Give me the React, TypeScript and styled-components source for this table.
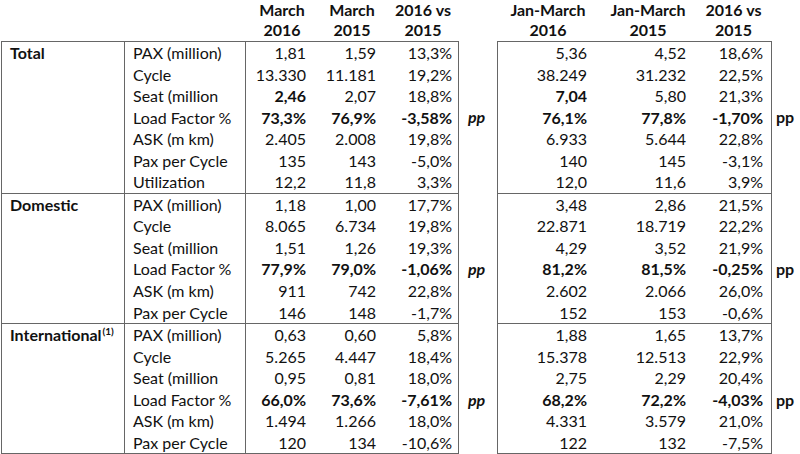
import React from "react";
import styled, { createGlobalStyle } from "styled-components";

const Global = createGlobalStyle`
  html, body { margin: 0; padding: 0; background: #fff; }
  body { font-family: Lato, "Open Sans", sans-serif; color: #111; }
`;

const LINE = "#666";
const ROW_H = 21.55;

type Row = {
  metric: string;
  l: [string, string, string];
  r: [string, string, string];
  bold?: boolean[];
  rbold?: boolean[];
  pp?: boolean;
};

type Section = { label: string; sup?: string; rows: Row[] };

const LF = [true, true, true];

const sections: Section[] = [
  {
    label: "Total",
    rows: [
      { metric: "PAX (million)", l: ["1,81", "1,59", "13,3%"], r: ["5,36", "4,52", "18,6%"] },
      { metric: "Cycle", l: ["13.330", "11.181", "19,2%"], r: ["38.249", "31.232", "22,5%"] },
      {
        metric: "Seat (million",
        l: ["2,46", "2,07", "18,8%"],
        r: ["7,04", "5,80", "21,3%"],
        bold: [true, false, false],
        rbold: [true, false, false],
      },
      { metric: "Load Factor %", l: ["73,3%", "76,9%", "-3,58%"], r: ["76,1%", "77,8%", "-1,70%"], bold: LF, rbold: LF, pp: true },
      { metric: "ASK (m km)", l: ["2.405", "2.008", "19,8%"], r: ["6.933", "5.644", "22,8%"] },
      { metric: "Pax per Cycle", l: ["135", "143", "-5,0%"], r: ["140", "145", "-3,1%"] },
      { metric: "Utilization", l: ["12,2", "11,8", "3,3%"], r: ["12,0", "11,6", "3,9%"] },
    ],
  },
  {
    label: "Domestic",
    rows: [
      { metric: "PAX (million)", l: ["1,18", "1,00", "17,7%"], r: ["3,48", "2,86", "21,5%"] },
      { metric: "Cycle", l: ["8.065", "6.734", "19,8%"], r: ["22.871", "18.719", "22,2%"] },
      { metric: "Seat (million", l: ["1,51", "1,26", "19,3%"], r: ["4,29", "3,52", "21,9%"] },
      { metric: "Load Factor %", l: ["77,9%", "79,0%", "-1,06%"], r: ["81,2%", "81,5%", "-0,25%"], bold: LF, rbold: LF, pp: true },
      { metric: "ASK (m km)", l: ["911", "742", "22,8%"], r: ["2.602", "2.066", "26,0%"] },
      { metric: "Pax per Cycle", l: ["146", "148", "-1,7%"], r: ["152", "153", "-0,6%"] },
    ],
  },
  {
    label: "International",
    sup: "(1)",
    rows: [
      { metric: "PAX (million)", l: ["0,63", "0,60", "5,8%"], r: ["1,88", "1,65", "13,7%"] },
      { metric: "Cycle", l: ["5.265", "4.447", "18,4%"], r: ["15.378", "12.513", "22,9%"] },
      { metric: "Seat (million", l: ["0,95", "0,81", "18,0%"], r: ["2,75", "2,29", "20,4%"] },
      { metric: "Load Factor %", l: ["66,0%", "73,6%", "-7,61%"], r: ["68,2%", "72,2%", "-4,03%"], bold: LF, rbold: LF, pp: true },
      { metric: "ASK (m km)", l: ["1.494", "1.266", "18,0%"], r: ["4.331", "3.579", "21,0%"] },
      { metric: "Pax per Cycle", l: ["120", "134", "-10,6%"], r: ["122", "132", "-7,5%"] },
    ],
  },
];

const Page = styled.div`
  width: 800px;
  height: 454px;
  overflow: hidden;
  padding-left: 1px;
  box-sizing: border-box;
  font-size: 16px;
`;

const HeaderRow = styled.div`
  display: grid;
  grid-template-columns: 124px 121px 65px 70px 78px 39px 92px 100px 81px;
  height: 41px;
`;

const HeaderCell = styled.div<{ $shift?: number }>`
  height: 41px;
  box-sizing: border-box;
  padding-bottom: 1px;
  display: flex;
  flex-direction: column;
  justify-content: flex-end;
  align-items: center;
  font-weight: 700;
  line-height: 20px;
  white-space: nowrap;
  padding-left: ${(p) => (p.$shift ?? 0) * 2}px;
`;

const SectionRow = styled.div`
  display: flex;
  align-items: stretch;
`;

const LeftBox = styled.div<{ $first: boolean }>`
  display: grid;
  grid-template-columns: 123px 121px 65px 70px 77px;
  border: 1px solid ${LINE};
  border-top-width: ${(p) => (p.$first ? 1 : 0)}px;
`;

const RightBox = styled.div<{ $first: boolean }>`
  display: grid;
  grid-template-columns: 92px 100px 81px;
  border: 1px solid ${LINE};
  border-top-width: ${(p) => (p.$first ? 1 : 0)}px;
`;

const GroupLabel = styled.div<{ $rows: number }>`
  grid-row: 1 / span ${(p) => p.$rows};
  grid-column: 1;
  border-right: 1px solid ${LINE};
  padding-left: 8px;
  font-weight: 700;
  line-height: ${ROW_H}px;
  white-space: nowrap;
`;

const Sup = styled.sup`
  font-size: 10px;
  line-height: 0;
  vertical-align: 6px;
  margin-left: 1px;
`;

const MetricCell = styled.div`
  grid-column: 2;
  height: ${ROW_H}px;
  line-height: ${ROW_H}px;
  border-right: 1px solid ${LINE};
  padding-left: 8px;
  white-space: nowrap;
`;

const ValueCell = styled.div<{ $bold?: boolean; $pad: number }>`
  height: ${ROW_H}px;
  line-height: ${ROW_H}px;
  text-align: right;
  padding-right: ${(p) => p.$pad}px;
  font-weight: ${(p) => (p.$bold ? 700 : 400)};
  white-space: nowrap;
`;

const PpColumn = styled.div<{ $width: number }>`
  width: ${(p) => p.$width}px;
  flex: none;
  display: flex;
  flex-direction: column;
`;

const PpCell = styled.div<{ $italic?: boolean; $pad: number }>`
  height: ${ROW_H}px;
  line-height: ${ROW_H}px;
  padding-left: ${(p) => p.$pad}px;
  font-weight: 700;
  font-style: ${(p) => (p.$italic ? "italic" : "normal")};
`;

const leftPads = [5, 5, 6];
const rightPads = [3, 4, 8];

export default function App() {
  return (
    <>
      <Global />
      <Page>
        <HeaderRow>
          <div />
          <div />
          <HeaderCell $shift={3.5}>
            <span>March</span>
            <span>2016</span>
          </HeaderCell>
          <HeaderCell $shift={6}>
            <span>March</span>
            <span>2015</span>
          </HeaderCell>
          <HeaderCell $shift={3}>
            <span>2016 vs</span>
            <span>2015</span>
          </HeaderCell>
          <div />
          <HeaderCell $shift={4}>
            <span>Jan-March</span>
            <span>2016</span>
          </HeaderCell>
          <HeaderCell $shift={8}>
            <span>Jan-March</span>
            <span>2015</span>
          </HeaderCell>
          <HeaderCell $shift={3}>
            <span>2016 vs</span>
            <span>2015</span>
          </HeaderCell>
        </HeaderRow>
        {sections.map((s, si) => (
          <SectionRow key={s.label}>
            <LeftBox $first={si === 0}>
              <GroupLabel $rows={s.rows.length}>
                {s.label}
                {s.sup && <Sup>{s.sup}</Sup>}
              </GroupLabel>
              {s.rows.map((r) => (
                <React.Fragment key={r.metric}>
                  <MetricCell>{r.metric}</MetricCell>
                  {r.l.map((v, i) => (
                    <ValueCell key={i} $pad={leftPads[i]} $bold={r.bold?.[i]}>
                      {v}
                    </ValueCell>
                  ))}
                </React.Fragment>
              ))}
            </LeftBox>
            <PpColumn $width={38}>
              {s.rows.map((r) => (
                <PpCell key={r.metric} $italic $pad={9}>
                  {r.pp ? "pp" : ""}
                </PpCell>
              ))}
            </PpColumn>
            <RightBox $first={si === 0}>
              {s.rows.map((r) => (
                <React.Fragment key={r.metric}>
                  {r.r.map((v, i) => (
                    <ValueCell key={i} $pad={rightPads[i]} $bold={r.rbold?.[i]}>
                      {v}
                    </ValueCell>
                  ))}
                </React.Fragment>
              ))}
            </RightBox>
            <PpColumn $width={29}>
              {s.rows.map((r) => (
                <PpCell key={r.metric} $pad={4}>
                  {r.pp ? "pp" : ""}
                </PpCell>
              ))}
            </PpColumn>
          </SectionRow>
        ))}
      </Page>
    </>
  );
}
